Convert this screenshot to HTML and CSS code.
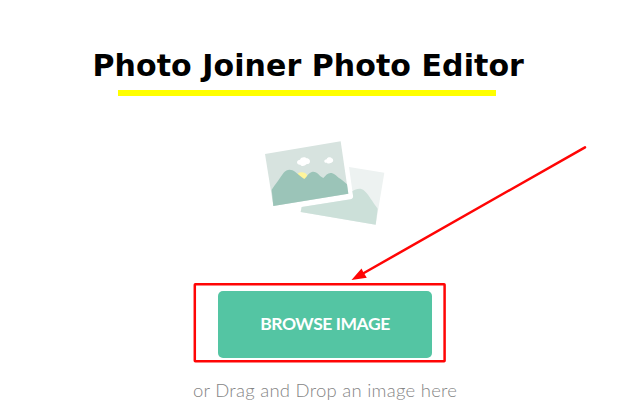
FILE: index.html
```html
<!DOCTYPE html>
<html lang="en">
<head>
<meta charset="utf-8">
<title>Photo Joiner Photo Editor</title>
<link rel="stylesheet" href="styles.css">
</head>
<body>
<main class="page">
  <h1 class="title"><span>Photo Joiner Photo Editor</span></h1>
  <div class="rule"></div>
  <svg class="photos" viewBox="0 0 420 315" aria-hidden="true">
    <path fill="#edf2f1" d="M282 111L388 128L362 284L137 246L140 231L287 208Q296 206 294 196Z"/>
    <path fill="#cce0d9" d="M140 231L287 208Q296 206 294 196L292 184C302 177 316 172 328 182C340 192 352 215 368 236L362 284L137 246Z"/>
    <path fill="#d7e3df" d="M30 72L257 34L280 191L55 228Z"/>
    <path fill="#fff59b" d="M128 131C137 124 153 126 157 137L155 144L147 150L137 146Z"/>
    <path fill="#9bc4b8" d="M50 179C62 162 76 142 86 128C96 116 110 117 121 126C131 134 139 142 148 147C157 139 160 128 173 125C187 124 194 139 205 144C213 135 219 127 230 129C240 131 247 142 257 147C265 153 272 159 276 163L280 191L55 228Z"/>
    <path fill="#fff" d="M126 97C126 91 131 90 135 89C138 80 151 80 155 85C163 85 167 93 164 98C161 104 154 101 154 103C148 110 138 109 136 104C131 105 126 102 126 97ZM208 95C207 90 211 89 215 88C217 80 228 81 230 85C236 87 236 96 231 97C228 101 218 102 216 98C212 99 209 98 208 95Z"/>
  </svg>
  <button class="browse" type="button"><span>BROWSE IMAGE</span></button>
  <p class="hint"><span>or Drag and Drop an image here</span></p>
  <svg class="annotation" viewBox="0 0 640 400" aria-hidden="true">
    <rect x="194.8" y="284.3" width="249.8" height="77" rx="0.5"/>
    <path d="M585 147.3L363 273.5"/>
    <path class="head" d="M351.5 280L361.5 268.4L363.5 272.5L366.8 277.7Z"/>
  </svg>
</main>
</body>
</html>
```
FILE: styles.css
```css
body {
  margin: 0;
  background: #fff;
}

.page {
  position: relative;
  display: flex;
  flex-direction: column;
  align-items: flex-start;
  width: 640px;
  height: 400px;
}

.page > * {
  flex: none;
}

.title {
  margin: 47px 0 0 92.5px;
  height: 43px;
  font: bold 30px/38px "DejaVu Sans", sans-serif;
  letter-spacing: 0.07px;
  color: #000;
  white-space: nowrap;
}

.rule {
  width: 378px;
  height: 6px;
  margin-left: 118px;
  background: #ff0;
}

.photos {
  width: 140px;
  height: 105px;
  margin: 34px 0 0 255px;
}

.browse {
  width: 214px;
  height: 67px;
  margin: 56px 0 0 218px;
  padding: 0 0 2px;
  border: 0;
  border-radius: 5px;
  background: #54c5a3;
  color: #fff;
  font: bold 17.5px/65px Lato, sans-serif;
  letter-spacing: -0.45px;
  white-space: nowrap;
}

.hint {
  margin: 22px 0 0 193px;
  font: 300 18.5px/20px Lato, sans-serif;
  color: #858585;
  letter-spacing: 0.26px;
  white-space: nowrap;
}

.annotation {
  position: absolute;
  inset: 0;
  width: 640px;
  height: 400px;
  fill: none;
  stroke: #ff0505;
  stroke-width: 2.5;
  stroke-linecap: round;
  pointer-events: none;
}

.head {
  fill: #ff0505;
  stroke: none;
}
```
